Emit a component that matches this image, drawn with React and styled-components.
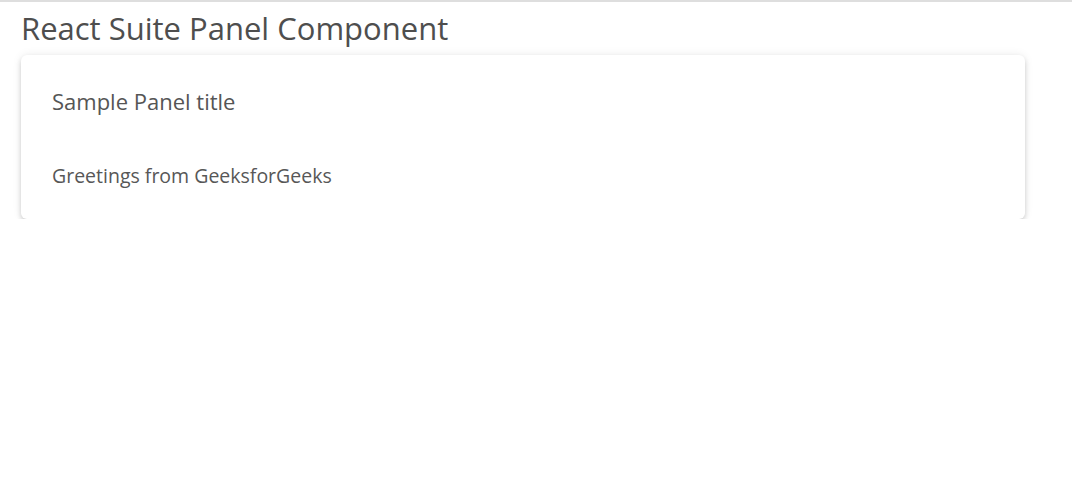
import React from 'react'
import styled, { createGlobalStyle } from 'styled-components'

const GlobalStyle = createGlobalStyle`
  html, body {
    margin: 0;
    padding: 0;
    background: #fff;
  }
  body {
    font-family: "Open Sans", "Noto Sans", sans-serif;
    color: #575757;
  }
`

const Page = styled.div`
  border-top: 2px solid #dedede;
  padding: 0 0 0 21px;
`

const Heading = styled.h1`
  margin: 0;
  padding: 6px 0 0 0;
  font-size: 31px;
  font-weight: 400;
  line-height: 40px;
  color: #4e4e4e;
`

const Panel = styled.div`
  width: 1004px;
  margin-top: 7px;
  background: #fff;
  border-radius: 6px;
  box-shadow: 0 3px 5px rgba(0, 0, 0, 0.16), 0 0 10px rgba(0, 0, 0, 0.08);
`

const PanelHeader = styled.div`
  padding: 31px 31px 0;
  font-size: 22px;
  line-height: 30px;
  color: #555;
`

const PanelBody = styled.div`
  padding: 47px 31px 30px;
  font-size: 19.5px;
  line-height: 26px;
  color: #575757;
`

const App = () => {
  return (
    <>
      <GlobalStyle />
      <Page>
        <Heading>React Suite Panel Component</Heading>
        <Panel>
          <PanelHeader>Sample Panel title</PanelHeader>
          <PanelBody>Greetings from GeeksforGeeks</PanelBody>
        </Panel>
      </Page>
    </>
  )
}

export default App
